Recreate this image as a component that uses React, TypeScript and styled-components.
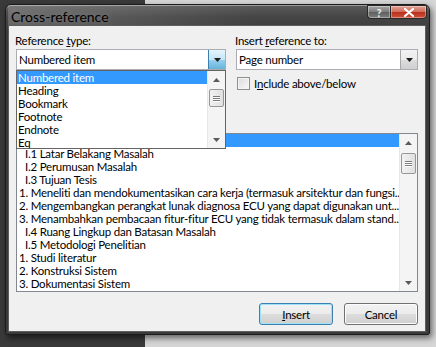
import styled, { createGlobalStyle } from "styled-components";

const GlobalStyle = createGlobalStyle`
  html, body {
    margin: 0;
    padding: 0;
  }
  body {
    font-family: Lato, "Noto Sans", sans-serif;
    font-size: 11.5px;
    letter-spacing: -0.22px;
    color: #000;
  }
`;

const referenceTypes = [
  "Numbered item",
  "Heading",
  "Bookmark",
  "Footnote",
  "Endnote",
  "Eq",
];

const items = [
  { text: "I PENDAHULUAN", indent: false },
  { text: "I.1 Latar Belakang Masalah", indent: true },
  { text: "I.2 Perumusan Masalah", indent: true },
  { text: "I.3 Tujuan Tesis", indent: true },
  {
    text: "1. Meneliti dan mendokumentasikan cara kerja (termasuk arsitektur dan fungsi..",
    indent: false,
  },
  {
    text: "2. Mengembangkan perangkat lunak diagnosa ECU yang dapat digunakan unt...",
    indent: false,
  },
  {
    text: "3. Menambahkan pembacaan fitur-fitur ECU yang tidak termasuk dalam stand...",
    indent: false,
  },
  { text: "I.4 Ruang Lingkup dan Batasan Masalah", indent: true },
  { text: "I.5 Metodologi Penelitian", indent: true },
  { text: "1. Studi literatur", indent: false },
  { text: "2. Konstruksi Sistem", indent: false },
  { text: "3. Dokumentasi Sistem", indent: false },
];

const Arrow = ({ dir, color = "#4d4d4d" }: { dir: "up" | "down"; color?: string }) => (
  <svg width="7" height="4" viewBox="0 0 7 4">
    {dir === "down" ? (
      <path d="M0 0 H7 L3.5 4 Z" fill={color} />
    ) : (
      <path d="M0 4 H7 L3.5 0 Z" fill={color} />
    )}
  </svg>
);

const ScrollBar = ({ thumbTop, thumbHeight }: { thumbTop: number; thumbHeight: number }) => (
  <Scroll>
    <ScrollArrow>
      <Arrow dir="up" color="#5a5a5a" />
    </ScrollArrow>
    <Track>
      <Thumb style={{ top: thumbTop, height: thumbHeight }}>
        <Grip />
        <Grip />
        <Grip />
      </Thumb>
    </Track>
    <ScrollArrow>
      <Arrow dir="down" color="#5a5a5a" />
    </ScrollArrow>
  </Scroll>
);

const App = () => {
  return (
    <>
      <GlobalStyle />
      <Desktop>
        <Window>
          <TitleBar>
            <Title>Cross-reference</Title>
            <Caption>
              <HelpButton>?</HelpButton>
              <CloseButton>
                <svg width="10" height="9" viewBox="0 0 10 9">
                  <path
                    d="M1 1 L9 8 M9 1 L1 8"
                    stroke="#fff"
                    strokeWidth="2.2"
                    strokeLinecap="round"
                  />
                </svg>
              </CloseButton>
            </Caption>
          </TitleBar>
          <Client>
            <TopRow>
              <Column $width={210}>
                <Label>
                  Reference <u>t</u>ype:
                </Label>
                <Combo>
                  <ComboText>Numbered item</ComboText>
                  <DropButton $hot>
                    <Arrow dir="down" color="#1b1b1b" />
                  </DropButton>
                  <DropList>
                    <Options>
                      {referenceTypes.map((t, i) => (
                        <Option key={t} $selected={i === 0}>
                          {t}
                        </Option>
                      ))}
                    </Options>
                    <ScrollBar thumbTop={1} thumbHeight={18} />
                  </DropList>
                </Combo>
              </Column>
              <Column $width={182}>
                <Label>
                  Insert <u>r</u>eference to:
                </Label>
                <Combo>
                  <ComboText>Page number</ComboText>
                  <DropButton>
                    <Arrow dir="down" color="#1b1b1b" />
                  </DropButton>
                </Combo>
                <CheckRow>
                  <CheckBox />
                  <span>
                    I<u>n</u>clude above/below
                  </span>
                </CheckRow>
              </Column>
            </TopRow>
            <ListBox>
              <Rows>
                {items.map((it, i) => (
                  <Row key={i} $selected={i === 0} $indent={it.indent}>
                    {it.text}
                  </Row>
                ))}
              </Rows>
              <ScrollBar thumbTop={2} thumbHeight={21} />
            </ListBox>
            <ButtonRow>
              <Button $default>
                <u>I</u>nsert
              </Button>
              <Button>Cancel</Button>
            </ButtonRow>
          </Client>
        </Window>
      </Desktop>
    </>
  );
};

export default App;

const Desktop = styled.div`
  width: 436px;
  height: 347px;
  box-sizing: border-box;
  padding: 4px 6px 0 5px;
  overflow: hidden;
  background: linear-gradient(to right, #3a3a3a 0 145px, #d6d6d6 145px);
`;

const Window = styled.div`
  width: 425px;
  height: 331px;
  box-sizing: border-box;
  border: 1px solid #1c1c1c;
  border-radius: 6px 6px 2px 2px;
  background: linear-gradient(to bottom, #5c5c5c 0, #454545 12px, #3a3a3a 30px, #3a3a3a 100%);
  box-shadow: 2px 3px 6px rgba(0, 0, 0, 0.55), inset 0 1px 0 #9a9a9a;
  display: flex;
  flex-direction: column;
  padding: 0 3px 2px 2px;
`;

const TitleBar = styled.div`
  height: 20px;
  display: flex;
  align-items: flex-start;
  justify-content: space-between;
  background: linear-gradient(to right, rgba(255, 255, 255, 0.18), rgba(255, 255, 255, 0) 60%);
`;

const Title = styled.div`
  font-size: 14px;
  letter-spacing: 0;
  color: #000;
  padding: 3px 0 0 3px;
  text-shadow: 0 0 6px rgba(255, 255, 255, 0.35);
`;

const Caption = styled.div`
  display: flex;
  margin-right: -1px;
`;

const CaptionButton = styled.div`
  height: 14px;
  box-sizing: border-box;
  border: 1px solid #2a2a2a;
  display: flex;
  align-items: center;
  justify-content: center;
  box-shadow: inset 0 0 0 1px rgba(255, 255, 255, 0.35);
`;

const HelpButton = styled(CaptionButton)`
  width: 23px;
  border-right: none;
  border-radius: 0 0 0 4px;
  background: linear-gradient(to bottom, #a8a8a8, #7b7b7b 50%, #5f5f5f 51%, #7c7c7c);
  color: #f2f2f2;
  font-weight: bold;
  font-size: 11px;
  line-height: 1;
`;

const CloseButton = styled(CaptionButton)`
  width: 37px;
  border-radius: 0 0 4px 0;
  background: linear-gradient(to bottom, #e3a297, #cf6a58 50%, #b72f1c 51%, #d0523a);
`;

const Client = styled.div`
  flex: 1;
  background: #f0f0f0;
  border: 1px solid #5e5e5e;
  box-sizing: border-box;
  padding: 8px 7px 0 7px;
  display: flex;
  flex-direction: column;
`;

const TopRow = styled.div`
  display: flex;
  gap: 10px;
`;

const Column = styled.div<{ $width: number }>`
  width: ${(p) => p.$width}px;
  display: flex;
  flex-direction: column;
`;

const Label = styled.div`
  height: 15px;
  line-height: 14px;
  margin-left: -1px;
`;

const Combo = styled.div`
  position: relative;
  height: 21px;
  box-sizing: border-box;
  border: 1px solid #abadb3;
  background: #fff;
  display: flex;
  align-items: center;
`;

const ComboText = styled.div`
  flex: 1;
  padding-left: 2px;
  line-height: 19px;
`;

const DropButton = styled.div<{ $hot?: boolean }>`
  width: 17px;
  height: 19px;
  box-sizing: border-box;
  border-left: 1px solid ${(p) => (p.$hot ? "#3c7fb1" : "#a6a6a6")};
  background: ${(p) =>
    p.$hot
      ? "linear-gradient(to bottom, #e5f4fc, #c4e5f6 50%, #98d1ef 51%, #68b3db)"
      : "linear-gradient(to bottom, #f2f2f2, #ebebeb 50%, #dddddd 51%, #cfcfcf)"};
  display: flex;
  align-items: center;
  justify-content: center;
`;

const DropList = styled.div`
  position: absolute;
  top: 20px;
  left: -1px;
  width: 210px;
  height: 79px;
  box-sizing: border-box;
  border: 1px solid #646464;
  background: #fff;
  display: flex;
  z-index: 2;
`;

const Options = styled.div`
  flex: 1;
  overflow: hidden;
`;

const Option = styled.div<{ $selected?: boolean }>`
  height: 13px;
  line-height: 13px;
  padding-left: 1px;
  white-space: nowrap;
  background: ${(p) => (p.$selected ? "#3399ff" : "transparent")};
  color: ${(p) => (p.$selected ? "#fff" : "#000")};
`;

const Scroll = styled.div`
  width: 17px;
  display: flex;
  flex-direction: column;
  background: #f4f4f4;
  border-left: 1px solid #e8e8e8;
`;

const ScrollArrow = styled.div`
  height: 17px;
  display: flex;
  align-items: center;
  justify-content: center;
`;

const Track = styled.div`
  flex: 1;
  position: relative;
`;

const Thumb = styled.div`
  position: absolute;
  left: 1px;
  right: 1px;
  box-sizing: border-box;
  border: 1px solid #979797;
  border-radius: 2px;
  background: linear-gradient(to right, #f2f2f2, #e0e0e0);
  display: flex;
  flex-direction: column;
  align-items: center;
  justify-content: center;
  gap: 1px;
`;

const Grip = styled.div`
  width: 7px;
  height: 1px;
  background: #7a7a7a;
  box-shadow: 0 1px 0 #fff;
`;

const CheckRow = styled.div`
  margin-top: 7px;
  display: flex;
  align-items: center;
  gap: 4px;
  height: 13px;
  margin-left: 1px;
`;

const CheckBox = styled.div`
  width: 13px;
  height: 13px;
  box-sizing: border-box;
  border: 1px solid #8e8f8f;
  background: linear-gradient(135deg, #dcdcdc, #f8f8f8);
  box-shadow: inset 0 0 0 1px #f4f4f4;
`;

const ListBox = styled.div`
  margin-top: 43px;
  height: 159px;
  box-sizing: border-box;
  border: 1px solid #828790;
  background: #fff;
  display: flex;
`;

const Rows = styled.div`
  flex: 1;
  overflow: hidden;
`;

const Row = styled.div<{ $selected?: boolean; $indent?: boolean }>`
  height: 13px;
  line-height: 13px;
  white-space: nowrap;
  padding-left: ${(p) => (p.$indent ? 8 : 2)}px;
  background: ${(p) => (p.$selected ? "#3399ff" : "transparent")};
  color: ${(p) => (p.$selected ? "#fff" : "#000")};
`;

const ButtonRow = styled.div`
  margin-top: 11px;
  display: flex;
  justify-content: flex-end;
  gap: 11px;
`;

const Button = styled.div<{ $default?: boolean }>`
  width: 74px;
  height: 22px;
  box-sizing: border-box;
  border: 1px solid ${(p) => (p.$default ? "#3c7fb1" : "#707070")};
  border-radius: 3px;
  background: linear-gradient(to bottom, #f2f2f2, #ebebeb 50%, #dddddd 51%, #cfcfcf);
  box-shadow: inset 0 0 0 1px ${(p) => (p.$default ? "#9ee2f9" : "#fcfcfc")};
  display: flex;
  align-items: center;
  justify-content: center;
`;
